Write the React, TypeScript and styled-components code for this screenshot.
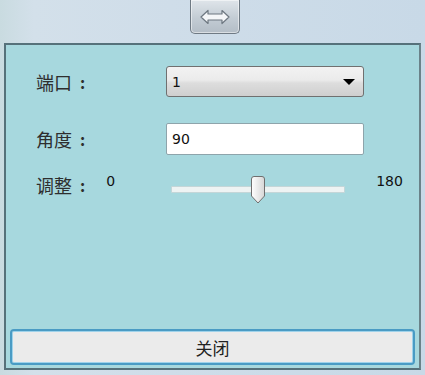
import React, { useState } from 'react';
import styled, { createGlobalStyle } from 'styled-components';

const GlobalStyle = createGlobalStyle`
  html, body {
    margin: 0;
    padding: 0;
    width: 425px;
    height: 375px;
    overflow: hidden;
  }
  body {
    font-family: "DejaVu Sans", "Noto Sans CJK SC", sans-serif;
    background: #cbdbe8;
  }
`;

const Window = styled.div`
  width: 425px;
  height: 375px;
  display: flex;
  flex-direction: column;
  background: linear-gradient(90deg, #c9dbe0 0%, #d3e0ea 8%, #cfdde9 40%, #c8d9e7 100%);
`;

const TopBar = styled.div`
  height: 43px;
  display: flex;
  justify-content: center;
  padding-left: 5px;
  box-sizing: border-box;
`;

const ToggleButton = styled.button`
  width: 50px;
  height: 34px;
  padding: 0;
  margin: 0;
  border: 1px solid #6f7a84;
  border-top: none;
  border-radius: 0 0 5px 5px;
  background: linear-gradient(180deg, #dfe5ea 0%, #c3ccd4 55%, #b3bdc6 100%);
  display: flex;
  align-items: center;
  justify-content: center;
  box-shadow: inset 0 0 0 1px rgba(255, 255, 255, 0.5);
`;

const Panel = styled.div`
  flex: 1;
  margin: 0 4px 5px 4px;
  border: 2px solid #56717a;
  border-right-color: #6a8289;
  background: #a7d8de;
  display: flex;
  flex-direction: column;
  padding: 21px 2px 0 2px;
  box-sizing: border-box;
`;

const Form = styled.div`
  flex: 1;
  display: flex;
  flex-direction: column;
`;

const Row = styled.div<{ gap: number }>`
  display: flex;
  align-items: center;
  margin-bottom: ${p => p.gap}px;
`;

const Label = styled.span`
  width: 158px;
  padding-left: 28px;
  box-sizing: border-box;
  font-family: "Noto Sans CJK SC", sans-serif;
  font-size: 18px;
  color: #2e2e2e;
  flex-shrink: 0;
  display: flex;
  align-items: center;
`;

const Colon = styled.span`
  margin-left: 8px;
  font-size: 16px;
  font-weight: bold;
`;

const Select = styled.div`
  width: 198px;
  height: 31px;
  box-sizing: border-box;
  border: 1px solid #707070;
  border-radius: 3px;
  background: linear-gradient(180deg, #f2f2f2 0%, #ebebeb 45%, #dddddd 55%, #cfcfcf 100%);
  display: flex;
  align-items: center;
  justify-content: space-between;
  padding: 0 8px 0 5px;
  font-family: "DejaVu Sans", sans-serif;
  font-size: 14px;
  color: #111;
`;

const Arrow = styled.span`
  width: 0;
  height: 0;
  border-left: 6px solid transparent;
  border-right: 6px solid transparent;
  border-top: 6px solid #000;
`;

const TextBox = styled.input`
  width: 198px;
  height: 32px;
  box-sizing: border-box;
  border: 1px solid #8ea4ab;
  border-radius: 2px;
  background: #fff;
  padding: 0 5px;
  font-family: "DejaVu Sans", sans-serif;
  font-size: 14px;
  color: #111;
  outline: none;
`;

const SliderRow = styled.div`
  display: flex;
  align-items: flex-start;
`;

const SliderLabel = styled(Label)`
  width: auto;
  padding-right: 21px;
  padding-top: 4px;
`;

const Value = styled.span`
  font-family: "DejaVu Sans", sans-serif;
  font-size: 14px;
  color: #111;
  padding-top: 5px;
`;

const Track = styled.div`
  position: relative;
  width: 172px;
  height: 5px;
  margin: 18px 31px 0 56px;
  background: #eef3f3;
  border: 1px solid #c4d6d8;
  border-radius: 1px;
`;

const Thumb = styled.div`
  position: absolute;
  top: -11px;
  width: 16px;
  height: 28px;
  margin-left: -8px;
`;

const Footer = styled.div`
  padding: 0 2px 3px 2px;
`;

const CloseButton = styled.button`
  width: 100%;
  height: 36px;
  box-sizing: border-box;
  border: 2px solid #4a9bc4;
  border-radius: 4px;
  background: #ebebeb;
  box-shadow: inset 0 0 0 1px #9fd2ea;
  font-family: "Noto Sans CJK SC", sans-serif;
  font-size: 17px;
  color: #222;
  padding: 0;
`;

function App() {
  const [angle, setAngle] = useState('90');
  const pct = Math.min(180, Math.max(0, Number(angle) || 0)) / 180;

  return (
    <Window>
      <GlobalStyle />
      <TopBar>
        <ToggleButton>
          <svg width="30" height="16" viewBox="0 0 30 16">
            <path
              d="M1 8 L8 1.5 V5 H22 V1.5 L29 8 L22 14.5 V11 H8 V14.5 Z"
              fill="#f4f6f8"
              stroke="#6d7780"
              strokeWidth="1.2"
              strokeLinejoin="round"
            />
          </svg>
        </ToggleButton>
      </TopBar>
      <Panel>
        <Form>
          <Row gap={26}>
            <Label>
              端口<Colon>:</Colon>
            </Label>
            <Select>
              <span>1</span>
              <Arrow />
            </Select>
          </Row>
          <Row gap={13}>
            <Label>
              角度<Colon>:</Colon>
            </Label>
            <TextBox value={angle} onChange={e => setAngle(e.target.value)} />
          </Row>
          <SliderRow>
            <SliderLabel>
              调整<Colon>:</Colon>
            </SliderLabel>
            <Value>0</Value>
            <Track>
              <Thumb style={{ left: `${pct * 100}%` }}>
                <svg width="16" height="28" viewBox="0 0 16 28">
                  <defs>
                    <linearGradient id="tg" x1="0" y1="0" x2="1" y2="0">
                      <stop offset="0" stopColor="#ffffff" />
                      <stop offset="1" stopColor="#d6d6d6" />
                    </linearGradient>
                  </defs>
                  <path
                    d="M1.5 3 Q1.5 0.5 4 0.5 H12 Q14.5 0.5 14.5 3 V20 L8 27 L1.5 20 Z"
                    fill="url(#tg)"
                    stroke="#6f6f6f"
                    strokeWidth="1"
                  />
                </svg>
              </Thumb>
            </Track>
            <Value>180</Value>
          </SliderRow>
        </Form>
        <Footer>
          <CloseButton>关闭</CloseButton>
        </Footer>
      </Panel>
    </Window>
  );
}

export default App;
